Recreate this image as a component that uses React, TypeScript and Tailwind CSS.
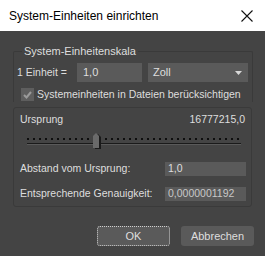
import React from 'react';

const font = { fontFamily: '"Liberation Sans", Arial, sans-serif' };

function Slider() {
  const dots = [];
  for (let x = 7; x <= 221; x += 6) dots.push(x);
  return (
    <svg width="226" height="20" viewBox="0 0 226 20" className="block">
      {dots.map((x) => (
        <rect key={x} x={x} y={6} width={2} height={2} fill="#0e0e0e" />
      ))}
      <rect x={7} y={11} width={214} height={1} fill="#1a1a1a" />
      <rect x={7} y={12} width={214} height={1} fill="#5a5a5a" />
      <path d="M75 17 V5 L78 2 L81 5 V17 Z" fill="#1a1a1a" />
      <path d="M73 16 V4 L76 1 L79 4 V16 Z" fill="#6a6a6a" />
    </svg>
  );
}

export default function App() {
  return (
    <div className="w-[265px] h-[256px] bg-[#444444] flex flex-col text-[10.5px] text-[#dedede] overflow-hidden whitespace-nowrap" style={font}>
      <div className="h-[31px] bg-white flex items-center justify-between pl-[9px] pr-[12px] text-black text-[12px]">
        <span>System-Einheiten einrichten</span>
        <svg width="12" height="12" viewBox="0 0 12 12">
          <path d="M0.5 0.5 L11.5 11.5 M11.5 0.5 L0.5 11.5" stroke="#111" strokeWidth="1.1" />
        </svg>
      </div>

      <div className="flex flex-col px-[13px] pt-[12px]">
        <fieldset className="border border-b-0 border-[#3a3a3a] rounded-t-[2px] h-[59px] pl-[3px] pr-[4px]">
          <legend className="ml-[5px] px-[2px] leading-[16px] text-[11px]">System-Einheitenskala</legend>
          <div className="flex items-center mt-[4px]">
            <span className="w-[60px]">1 Einheit =</span>
            <div className="w-[65px] h-[19px] bg-[#5a5a5a] flex items-center px-[6px] text-[11px]">1,0</div>
            <div className="ml-[6px] w-[100px] h-[19px] bg-[#5a5a5a] flex items-center justify-between pl-[5px] pr-[6px] text-[11px]">
              <span>Zoll</span>
              <svg width="7" height="4" viewBox="0 0 7 4">
                <path d="M0 0 H7 L3.5 4 Z" fill="#d8d8d8" />
              </svg>
            </div>
          </div>
          <div className="flex items-center mt-[5px] pl-[4px]">
            <div className="w-[13px] h-[13px] bg-[#5e5e5e] flex items-center justify-center">
              <svg width="9" height="8" viewBox="0 0 9 8">
                <path d="M1 4 L3.5 6.5 L8 1" stroke="#9a9a9a" strokeWidth="2" fill="none" />
              </svg>
            </div>
            <span className="ml-[3px]">Systemeinheiten in Dateien berücksichtigen</span>
          </div>
        </fieldset>

        <div className="mt-[5px] h-[100px] border border-[#3a3a3a] rounded-[3px] px-[6px] pt-[3px] flex flex-col">
          <div className="flex justify-between leading-[16px]">
            <span>Ursprung</span>
            <span>16777215,0</span>
          </div>
          <div className="mt-[5px]">
            <Slider />
          </div>
          <div className="flex items-center justify-between mt-[9px]">
            <span>Abstand vom Ursprung:</span>
            <div className="w-[81px] h-[14px] bg-[#5a5a5a] flex items-center px-[3px] mr-[-1px]">1,0</div>
          </div>
          <div className="flex items-center justify-between mt-[9px]">
            <span>Entsprechende Genauigkeit:</span>
            <div className="w-[81px] h-[14px] bg-[#5a5a5a] flex items-center px-[3px] mr-[-1px] text-[#c8c8c8]">0,0000001192</div>
          </div>
        </div>

        <div className="flex justify-end gap-[11px] mt-[19px] mr-[-2px] text-[11px]">
          <button className="w-[73px] h-[20px] bg-[#5a5a5a] rounded-[3px] border border-dotted border-[#cfcfcf] flex items-center justify-center">OK</button>
          <button className="w-[73px] h-[20px] bg-[#5a5a5a] rounded-[3px] flex items-center justify-center">Abbrechen</button>
        </div>
      </div>
    </div>
  );
}
